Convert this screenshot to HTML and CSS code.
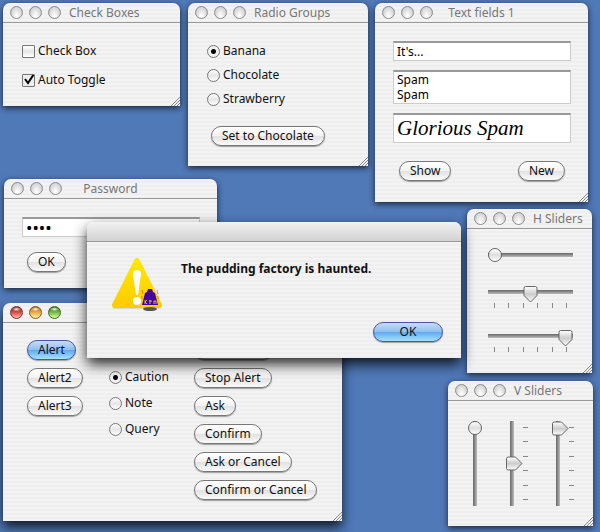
FILE: index.html
```
<!DOCTYPE html>
<html lang="en">
<head>
    <meta charset="UTF-8">
    <title>Widgets</title>
    <link rel="stylesheet" href="styles.css">
</head>
<body>
    <main class="desktop">
        <section class="window win-check">
            <header class="titlebar">
                <div class="lights"><i></i><i></i><i></i></div>
                <h2>Check Boxes</h2>
            </header>
            <div class="content options loose">
                <label><input type="checkbox">Check Box</label>
                <label><input type="checkbox" checked>Auto Toggle</label>
            </div>
            <svg class="grip" viewBox="0 0 10 10"><path d="M1 10L10 1M4 10L10 4M7 10L10 7"/></svg>
        </section>

        <section class="window win-radio">
            <header class="titlebar">
                <div class="lights"><i></i><i></i><i></i></div>
                <h2>Radio Groups</h2>
            </header>
            <div class="content">
                <div class="options">
                    <label><input type="radio" name="flavour" checked>Banana</label>
                    <label><input type="radio" name="flavour">Chocolate</label>
                    <label><input type="radio" name="flavour">Strawberry</label>
                </div>
                <button class="button">Set to Chocolate</button>
            </div>
            <svg class="grip" viewBox="0 0 10 10"><path d="M1 10L10 1M4 10L10 4M7 10L10 7"/></svg>
        </section>

        <section class="window win-text">
            <header class="titlebar">
                <div class="lights"><i></i><i></i><i></i></div>
                <h2>Text fields 1</h2>
            </header>
            <div class="content fields">
                <input class="field" type="text" value="It's..." aria-label="Single line">
                <textarea class="field" rows="2" aria-label="Multiple lines">Spam
Spam</textarea>
                <input class="field fancy" type="text" value="Glorious Spam" aria-label="Styled">
                <div class="actions">
                    <button class="button">Show</button>
                    <button class="button">New</button>
                </div>
            </div>
            <svg class="grip" viewBox="0 0 10 10"><path d="M1 10L10 1M4 10L10 4M7 10L10 7"/></svg>
        </section>

        <section class="window win-password">
            <header class="titlebar">
                <div class="lights"><i></i><i></i><i></i></div>
                <h2>Password</h2>
            </header>
            <div class="content fields">
                <input class="field" type="password" value="spam" aria-label="Password">
                <div class="actions">
                    <button class="button">OK</button>
                </div>
            </div>
        </section>

        <section class="window win-alerts">
            <header class="titlebar">
                <div class="lights on"><i></i><i></i><i></i></div>
            </header>
            <div class="content alert-grid">
                <div class="stack">
                    <button class="button primary">Alert</button>
                    <button class="button">Alert2</button>
                    <button class="button">Alert3</button>
                </div>
                <div class="options kinds">
                    <label><input type="radio" name="kind" checked>Caution</label>
                    <label><input type="radio" name="kind">Note</label>
                    <label><input type="radio" name="kind">Query</label>
                </div>
                <div class="stack">
                    <button class="button">Note Alert</button>
                    <button class="button">Stop Alert</button>
                    <button class="button">Ask</button>
                    <button class="button">Confirm</button>
                    <button class="button">Ask or Cancel</button>
                    <button class="button">Confirm or Cancel</button>
                </div>
            </div>
            <svg class="grip" viewBox="0 0 10 10"><path d="M1 10L10 1M4 10L10 4M7 10L10 7"/></svg>
        </section>

        <section class="window win-hsliders">
            <header class="titlebar">
                <div class="lights"><i></i><i></i><i></i></div>
                <h2>H Sliders</h2>
            </header>
            <div class="content">
                <input class="slider round" type="range" min="0" max="10" value="0" aria-label="Plain">
                <div class="ticked">
                    <input class="slider" type="range" min="0" max="10" value="5" aria-label="Ticked">
                    <div class="ticks"><i></i><i></i><i></i><i></i><i></i><i></i></div>
                </div>
                <div class="ticked">
                    <input class="slider" type="range" min="0" max="10" value="10" aria-label="Snapping">
                    <div class="ticks"><i></i><i></i><i></i><i></i><i></i><i></i></div>
                </div>
            </div>
            <svg class="grip" viewBox="0 0 10 10"><path d="M1 10L10 1M4 10L10 4M7 10L10 7"/></svg>
        </section>

        <section class="window win-vsliders">
            <header class="titlebar">
                <div class="lights"><i></i><i></i><i></i></div>
                <h2>V Sliders</h2>
            </header>
            <div class="content vertical">
                <input class="slider round" type="range" min="0" max="10" value="0" aria-label="Plain">
                <div class="ticked">
                    <input class="slider" type="range" min="0" max="10" value="5" aria-label="Ticked">
                    <div class="ticks"><i></i><i></i><i></i><i></i><i></i><i></i></div>
                </div>
                <div class="ticked">
                    <input class="slider" type="range" min="0" max="10" value="0" aria-label="Snapping">
                    <div class="ticks"><i></i><i></i><i></i><i></i><i></i><i></i></div>
                </div>
            </div>
            <svg class="grip" viewBox="0 0 10 10"><path d="M1 10L10 1M4 10L10 4M7 10L10 7"/></svg>
        </section>

        <section class="window dialog" role="alertdialog" aria-labelledby="message">
            <header class="titlebar"></header>
            <div class="content">
                <div class="message">
                    <svg class="caution" viewBox="0 0 52 54" width="52" height="54">
                        <defs>
                            <linearGradient id="yellow" x1="0" y1="0" x2="0" y2="1">
                                <stop offset="0" stop-color="#ffe800"/>
                                <stop offset="1" stop-color="#ffcc00"/>
                            </linearGradient>
                        </defs>
                        <path d="M26 5L4 49H48Z" fill="#888" stroke="#888" stroke-width="5" stroke-linejoin="round" opacity=".4"/>
                        <path d="M26 4L4 48H48Z" fill="url(#yellow)" stroke="url(#yellow)" stroke-width="6" stroke-linejoin="round"/>
                        <path d="M22 17Q22 13 26 13Q30 13 30 17L27 38H25Z" fill="#fff"/>
                        <circle cx="26" cy="44" r="4" fill="#fff"/>
                        <ellipse cx="39" cy="52" rx="7" ry="2" fill="#555"/>
                        <path d="M31 33l1 4M46 33l1 4M31 39v3M47 39v3" stroke="#c0502a" fill="none" opacity=".6"/>
                        <path d="M36 35L37 32H41L42 35L44 36L47 48H31L34 36Z" fill="#4600a8"/>
                        <path d="M34 43v4M36 43l-2 2l2 2M39 43v4M38 44h3M43 47v-3h2v3" stroke="#c9b85a" fill="none"/>
                    </svg>
                    <p id="message">The pudding factory is haunted.</p>
                </div>
                <button class="button primary">OK</button>
            </div>
        </section>
    </main>
</body>
</html>
```

FILE: styles.css
```
* {
    box-sizing: border-box;
}
body {
    margin: 0;
    font-family: 'Lucida Grande', 'Noto Sans', sans-serif;
    font-size: 12px;
    line-height: 16px;
    color: #111;
}
.desktop {
    position: relative;
    min-height: 100vh;
    overflow: hidden;
    background: #5079b8;
}

/* windows */
.window {
    position: absolute;
    border-radius: 7px 7px 0 0;
    background: repeating-linear-gradient(#f3f3f3 0 2px, #eeeeee 2px 4px);
    box-shadow: 0 2px 6px rgba(0, 0, 0, 0.7);
}
.win-check { left: 3px; top: 3px; width: 177px; }
.win-radio { left: 188px; top: 3px; width: 180px; }
.win-text { left: 375px; top: 3px; width: 213px; }
.win-password { left: 4px; top: 179px; width: 213px; }
.win-alerts { left: 3px; top: 303px; width: 339px; box-shadow: 0 6px 12px rgba(0, 0, 0, 0.8); }
.win-hsliders { left: 467px; top: 209px; width: 125px; }
.win-vsliders { left: 448px; top: 381px; width: 145px; }
.dialog { left: 87px; top: 222px; width: 374px; box-shadow: 0 6px 14px rgba(0, 0, 0, 0.85); }

.titlebar {
    display: flex;
    align-items: center;
    height: 20px;
    padding-left: 7px;
    border-bottom: 1px solid #999;
}
.titlebar::after {
    content: "";
    flex: 0 1 66px;
}
.titlebar h2 {
    flex: 1 0 auto;
    margin: 0;
    font-size: 12px;
    font-weight: normal;
    text-align: center;
    color: #777;
}
.lights {
    display: flex;
    flex: none;
    gap: 6px;
    margin-right: 8px;
}
.lights i {
    width: 13px;
    height: 13px;
    border: 1px solid #8c8c8c;
    border-radius: 50%;
    background: radial-gradient(ellipse at 50% 90%, #fff 10%, #dcdcdc 60%, #bbb);
}
.lights.on i {
    border-color: #6d3a33;
    background: radial-gradient(ellipse 4px 2px at 50% 20%, #fff, transparent), linear-gradient(#9a2f2a, #d8504a 50%, #ffb9ae);
}
.lights.on i:nth-child(2) {
    border-color: #7d5a2a;
    background: radial-gradient(ellipse 4px 2px at 50% 20%, #fff, transparent), linear-gradient(#b06a1c, #ecac45 50%, #fff3a0);
}
.lights.on i:nth-child(3) {
    border-color: #3f6428;
    background: radial-gradient(ellipse 4px 2px at 50% 20%, #fff, transparent), linear-gradient(#3f7a20, #78b848 50%, #d6ff9d);
}
.grip {
    position: absolute;
    right: 0;
    bottom: 0;
    width: 10px;
    height: 10px;
    stroke: #888;
}

/* buttons */
.button {
    height: 20px;
    padding: 0 10px;
    border: 1px solid #777;
    border-radius: 10px;
    background: linear-gradient(#fff, #f3f3f3 48%, #e2e2e2 52%, #fafafa);
    box-shadow: 0 1px 1px rgba(0, 0, 0, 0.35);
    font: inherit;
    color: #111;
}
.button.primary {
    border-color: #4a55a5;
    background: linear-gradient(#c8dcf5, #8fbff0 48%, #62aaf0 52%, #a5e2ff);
}

/* check boxes and radios */
.options {
    display: flex;
    flex-direction: column;
    gap: 8px;
}
.options.loose {
    gap: 13px;
}
.options label {
    display: flex;
    align-items: center;
    gap: 3px;
}
.options input {
    appearance: none;
    width: 13px;
    height: 13px;
    margin: 0;
    border: 1px solid #777;
    background: linear-gradient(#fff, #e6e6e6 50%, #fff);
}
.options input[type="radio"] {
    border-radius: 50%;
}
.options input[type="radio"]:checked {
    background: radial-gradient(circle, #000 2px, #f0f0f0 3px);
}
.options input[type="checkbox"] {
    border-radius: 1px;
}
.options input[type="checkbox"]:checked {
    background: url("data:image/svg+xml,%3Csvg xmlns='http://www.w3.org/2000/svg' viewBox='0 0 13 13'%3E%3Cpath d='M3 5L6 9L12 0' fill='none' stroke='black' stroke-width='2'/%3E%3C/svg%3E") border-box, #eee;
}

.win-check .content {
    padding: 20px 19px 18px;
}
.win-radio .content {
    padding: 20px 19px;
}
.win-radio .button {
    margin: 19px 4px 0;
}

/* text fields */
.fields {
    display: flex;
    flex-direction: column;
    gap: 9px;
    padding: 18px 17px 21px 18px;
}
.field {
    display: block;
    width: 100%;
    height: 20px;
    margin: 0;
    padding: 0 3px;
    border: 1px solid #ccc;
    border-top: 2px solid #999;
    background: #fff;
    font: inherit;
    color: #000;
}
textarea.field {
    height: 34px;
    line-height: 15px;
    resize: none;
    overflow: hidden;
}
.field.fancy {
    height: 30px;
    font: italic 21px 'Liberation Serif', serif;
}
.field[type="password"] {
    font-size: 17px;
}
.actions {
    display: flex;
    justify-content: space-between;
    padding: 9px 6px 0;
}
.win-password .fields {
    padding-bottom: 16px;
}
.win-password .actions {
    padding: 6px 5px 0;
}

/* alerts */
.alert-grid {
    display: grid;
    grid-template-columns: 82px 85px 1fr;
    padding: 17px 24px 21px;
}
.stack {
    display: flex;
    flex-direction: column;
    align-items: flex-start;
    gap: 8px;
}
.kinds {
    gap: 10px;
    padding-top: 29px;
}

/* sliders */
.slider {
    appearance: none;
    display: block;
    width: 100%;
    height: 17px;
    margin: 0;
    background: linear-gradient(#666, #888 40%, #bbb) 0 4px / 100% 4px no-repeat;
}
.slider::-webkit-slider-thumb {
    appearance: none;
    width: 15px;
    height: 17px;
    background: url("data:image/svg+xml,%3Csvg xmlns='http://www.w3.org/2000/svg' viewBox='0 0 15 17'%3E%3ClinearGradient id='g' x2='0' y2='1'%3E%3Cstop stop-color='white'/%3E%3Cstop offset='.5' stop-color='%23ccc'/%3E%3Cstop offset='1' stop-color='white'/%3E%3C/linearGradient%3E%3Cpath d='M2.5 .5H12.5Q14 .5 14 2.5V9.5L7.5 16L1 9.5V2.5Q1 .5 2.5 .5Z' fill='url(%23g)' stroke='%23666'/%3E%3C/svg%3E");
}
.slider.round {
    height: 14px;
    background-position: 0 5px;
}
.slider.round::-webkit-slider-thumb {
    width: 14px;
    height: 14px;
    border: 1px solid #666;
    border-radius: 50%;
    background: linear-gradient(#fff, #ddd 50%, #fff);
}
.ticks {
    display: flex;
    justify-content: space-between;
    padding: 0 6px;
}
.ticks i {
    width: 1px;
    height: 5px;
    background: #888;
}
.win-hsliders .content {
    display: flex;
    flex-direction: column;
    gap: 22px;
    padding: 19px 19px 21px 21px;
}
.win-hsliders .round {
    margin-bottom: 2px;
}

.vertical {
    display: flex;
    gap: 24px;
    height: 125px;
    padding: 20px;
}
.vertical .ticked {
    display: flex;
}
.vertical .slider {
    writing-mode: vertical-lr;
    width: 17px;
    height: 85px;
    background: linear-gradient(90deg, #666, #888 40%, #bbb) 4px 0 / 4px 100% no-repeat;
}
.vertical .slider.round {
    width: 14px;
    background-position: 5px 0;
}
.vertical .slider::-webkit-slider-thumb {
    width: 17px;
    height: 15px;
    background: url("data:image/svg+xml,%3Csvg xmlns='http://www.w3.org/2000/svg' viewBox='0 0 17 15'%3E%3ClinearGradient id='g' x2='0' y2='1'%3E%3Cstop stop-color='white'/%3E%3Cstop offset='.5' stop-color='%23ccc'/%3E%3Cstop offset='1' stop-color='white'/%3E%3C/linearGradient%3E%3Cpath d='M.5 2.5V12.5Q.5 14 2.5 14H9.5L16 7.5L9.5 1H2.5Q.5 1 .5 2.5Z' fill='url(%23g)' stroke='%23666'/%3E%3C/svg%3E");
}
.vertical .slider.round::-webkit-slider-thumb {
    width: 14px;
    height: 14px;
    background: linear-gradient(#fff, #ddd 50%, #fff);
}
.vertical .ticks {
    flex-direction: column;
    padding: 6px 0;
}
.vertical .ticks i {
    width: 5px;
    height: 1px;
}

/* dialog */
.dialog .titlebar {
    background: linear-gradient(#f2f2f2, #d2d2d2);
    border-radius: 7px 7px 0 0;
}
.dialog .content {
    display: flex;
    flex-direction: column;
    padding: 15px 18px 16px 24px;
}
.message {
    display: flex;
    gap: 18px;
}
.message p {
    margin: 4px 0 0;
    font-weight: bold;
}
.dialog .button {
    align-self: flex-end;
    width: 70px;
    margin-top: 11px;
}
```
